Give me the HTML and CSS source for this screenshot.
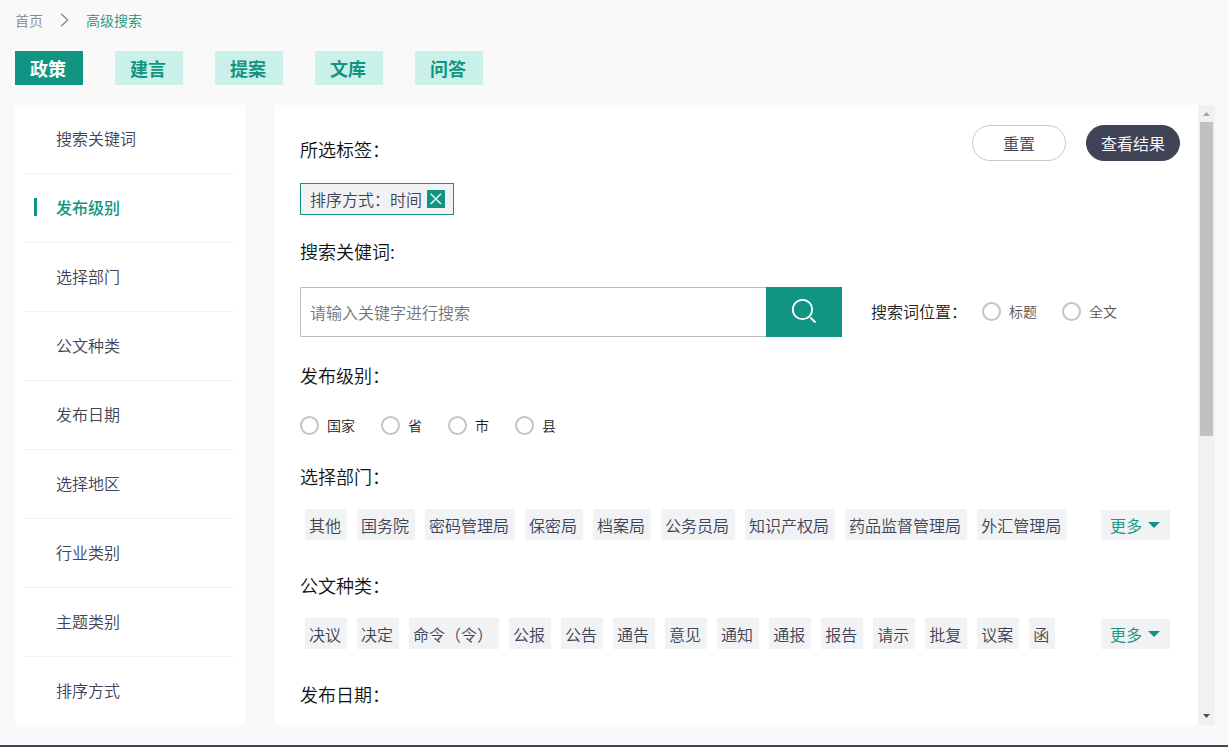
FILE: index.html
```html
<!DOCTYPE html>
<html lang="zh-CN">
<head>
<meta charset="utf-8">
<meta name="viewport" content="width=device-width, initial-scale=1">
<title>高级搜索</title>
<link rel="stylesheet" href="styles.css">
</head>
<body>
<div class="page">
  <nav class="breadcrumb" aria-label="面包屑">
    <a class="crumb" href="#">首页</a>
    <svg class="crumb-arrow" width="9" height="14" viewBox="0 0 9 14" aria-hidden="true"><path d="M1 .7 7.7 7 1 13.3"/></svg>
    <a class="crumb crumb-current" href="#">高级搜索</a>
  </nav>

  <div class="tabs">
    <button class="tab tab-active" type="button">政策</button>
    <button class="tab" type="button">建言</button>
    <button class="tab" type="button">提案</button>
    <button class="tab" type="button">文库</button>
    <button class="tab" type="button">问答</button>
  </div>

  <div class="columns">
    <nav class="sidebar" aria-label="筛选条件">
      <a class="side-link" href="#">搜索关键词</a>
      <a class="side-link side-active" href="#">发布级别</a>
      <a class="side-link" href="#">选择部门</a>
      <a class="side-link" href="#">公文种类</a>
      <a class="side-link" href="#">发布日期</a>
      <a class="side-link" href="#">选择地区</a>
      <a class="side-link" href="#">行业类别</a>
      <a class="side-link" href="#">主题类别</a>
      <a class="side-link" href="#">排序方式</a>
    </nav>

    <main class="panel">
      <form class="filters">
        <section class="section-tags">
          <div class="top-row">
            <h2 class="heading">所选标签：</h2>
            <div class="actions">
              <button class="pill" type="reset">重置</button>
              <button class="pill pill-dark" type="button">查看结果</button>
            </div>
          </div>
          <div class="selected">
            <span>排序方式：时间</span>
            <button class="remove" type="button" aria-label="移除">
              <svg width="18" height="18" viewBox="0 0 18 18" aria-hidden="true"><path d="M3.700 3.700 14 14M14 3.700 3.700 14"/></svg>
            </button>
          </div>
        </section>

        <section class="section-search">
          <h2 class="heading"><label for="keyword">搜索关健词:</label></h2>
          <div class="search-row">
            <div class="search-box">
              <input class="search-input" id="keyword" type="text" placeholder="请输入关键字进行搜索">
              <button class="search-button" type="button" aria-label="搜索">
                <svg width="26" height="26" viewBox="0 0 26 26" aria-hidden="true"><circle cx="11.500" cy="10.500" r="9.700"/><path d="m19.300 18.300 5.200 5.200"/></svg>
              </button>
            </div>
            <div class="position" role="radiogroup" aria-labelledby="position-label">
              <span id="position-label">搜索词位置：</span>
              <div class="radios radios-muted">
                <label class="option"><input class="radio" type="radio" name="position">标题</label>
                <label class="option"><input class="radio" type="radio" name="position">全文</label>
              </div>
            </div>
          </div>
        </section>

        <section class="section-level">
          <h2 class="heading">发布级别：</h2>
          <div class="radios radios-level">
            <label class="option"><input class="radio" type="radio" name="level">国家</label>
            <label class="option"><input class="radio" type="radio" name="level">省</label>
            <label class="option"><input class="radio" type="radio" name="level">市</label>
            <label class="option"><input class="radio" type="radio" name="level">县</label>
          </div>
        </section>

        <section class="section-chips">
          <h2 class="heading">选择部门：</h2>
          <div class="chip-row">
            <div class="chips">
              <button class="chip" type="button">其他</button>
              <button class="chip" type="button">国务院</button>
              <button class="chip" type="button">密码管理局</button>
              <button class="chip" type="button">保密局</button>
              <button class="chip" type="button">档案局</button>
              <button class="chip" type="button">公务员局</button>
              <button class="chip" type="button">知识产权局</button>
              <button class="chip" type="button">药品监督管理局</button>
              <button class="chip" type="button">外汇管理局</button>
            </div>
            <button class="more" type="button">更多<svg width="12" height="6" viewBox="0 0 12 6" aria-hidden="true"><path d="M0 0h12L6 6z"/></svg></button>
          </div>
        </section>

        <section class="section-chips">
          <h2 class="heading">公文种类：</h2>
          <div class="chip-row">
            <div class="chips">
              <button class="chip" type="button">决议</button>
              <button class="chip" type="button">决定</button>
              <button class="chip" type="button">命令（令）</button>
              <button class="chip" type="button">公报</button>
              <button class="chip" type="button">公告</button>
              <button class="chip" type="button">通告</button>
              <button class="chip" type="button">意见</button>
              <button class="chip" type="button">通知</button>
              <button class="chip" type="button">通报</button>
              <button class="chip" type="button">报告</button>
              <button class="chip" type="button">请示</button>
              <button class="chip" type="button">批复</button>
              <button class="chip" type="button">议案</button>
              <button class="chip" type="button">函</button>
            </div>
            <button class="more" type="button">更多<svg width="12" height="6" viewBox="0 0 12 6" aria-hidden="true"><path d="M0 0h12L6 6z"/></svg></button>
          </div>
        </section>

        <h2 class="heading">发布日期：</h2>
      </form>
      <div class="scrollbar" aria-hidden="true">
        <svg class="arrow-up" width="17" height="17" viewBox="0 0 17 17"><path d="M5 11h7L8.500 7z"/></svg>
        <div class="track"><div class="thumb"></div></div>
        <svg class="arrow-down" width="17" height="17" viewBox="0 0 17 17"><path d="M5 6h7L8.500 10z"/></svg>
      </div>
    </main>
  </div>
</div>
<footer class="footer"></footer>
</body>
</html>
```
FILE: styles.css
```css
* { box-sizing: border-box; }

body {
  margin: 0;
  background: #f9f9f9;
  color: #404356;
  font-family: "Noto Sans CJK SC", sans-serif;
  font-size: 16px;
  font-weight: 350;
  line-height: 24px;
}

button, input { font: inherit; color: inherit; margin: 0; }
button { padding: 0; border: 0; cursor: pointer; }
a { text-decoration: none; color: inherit; }
svg { display: block; }

.page { padding: 8px 13px 20px 15px; }

.breadcrumb {
  display: flex;
  align-items: center;
  gap: 17px;
  font-size: 14px;
}
.crumb { color: #888; }
.crumb-current { color: #119582; }
.crumb-arrow { fill: none; stroke: #888; stroke-width: 1.3; }

.tabs { display: flex; gap: 32px; margin: 19px 0 20px; }
.tab {
  height: 34px;
  padding: 0 17px 0 15px;
  background: #caf0ea;
  color: #119582;
  font-size: 18px;
  font-weight: 700;
}
.tab-active { background: #119582; color: #fff; }

.columns { display: flex; gap: 30px; }

.sidebar {
  flex: 0 0 230px;
  padding: 0 11px 0 9px;
  background: #fff;
}
.side-link {
  display: flex;
  align-items: center;
  height: 69px;
  padding: 0 0 2px 32px;
  border-bottom: 1px solid #f1f1f1;
}
.side-link:last-child { height: 68px; border-bottom: 0; }
.side-active { padding-left: 10px; color: #119582; font-weight: 500; }
.side-active::before {
  content: "";
  width: 3px;
  height: 18px;
  margin-right: 19px;
  background: #119582;
}

.panel { flex: 1; min-width: 0; display: flex; background: #fff; }
.filters { flex: 1; min-width: 0; padding: 20px 18px 18px 25px; }

.heading {
  margin: 0;
  color: #111;
  font-size: 18px;
  font-weight: 350;
  line-height: 24px;
}

.top-row { display: flex; justify-content: space-between; align-items: flex-end; margin-bottom: 22px; }
.actions { display: flex; gap: 20px; }
.pill {
  width: 94px;
  height: 36px;
  border: 1px solid #c8c8c8;
  border-radius: 18px;
  background: #fff;
}
.pill-dark { border-color: #404356; background: #404356; color: #fff; }

.selected {
  display: inline-flex;
  align-items: center;
  gap: 5px;
  height: 32px;
  padding: 0 8px 0 9px;
  border: 1px solid #119582;
  background: #f0f2f4;
  vertical-align: top;
}
.remove { width: 18px; height: 18px; background: #119582; }
.remove path { stroke: #fff; stroke-width: 1.3; }

.section-tags { margin-bottom: 24px; }

.section-search { margin-bottom: 26px; }
.search-row { display: flex; align-items: center; gap: 29px; margin-top: 24px; }
.search-box { display: flex; flex: 0 1 542px; min-width: 0; height: 50px; }
.search-input {
  flex: 1;
  min-width: 0;
  padding: 0 9px;
  border: 1px solid #bbb;
  border-right: 0;
  border-radius: 2px 0 0 2px;
  background: #fff;
}
.search-input::placeholder { color: #757575; opacity: 1; }
.search-button {
  display: flex;
  align-items: center;
  justify-content: center;
  flex: 0 0 76px;
  background: #119582;
}
.search-button svg { fill: none; stroke: #fff; stroke-width: 1.8; }
.position { display: flex; align-items: center; gap: 15px; padding-bottom: 2px; color: #222; white-space: nowrap; }

.radios { display: flex; gap: 25px; color: #222; font-size: 14px; }
.radios-muted { color: #555; }
.option { display: flex; align-items: center; gap: 8px; }
.radio {
  appearance: none;
  width: 19px;
  height: 19px;
  border: 2px solid #c4c4c4;
  border-radius: 50%;
  background: #fff;
}
.radio:checked { border: 6px solid #119582; }

.section-level { margin-bottom: 27px; }
.radios-level { gap: 26px; margin-top: 26px; }

.section-chips { margin-bottom: 33px; }
.chip-row {
  display: flex;
  justify-content: space-between;
  align-items: flex-end;
  gap: 20px;
  margin-top: 21px;
  padding: 0 10px 0 5px;
}
.chips { display: flex; flex-wrap: wrap; gap: 10px; }
.chip { height: 31px; padding: 0 6px 0 4px; background: #f0f2f4; }
.more {
  display: flex;
  align-items: center;
  flex: none;
  gap: 6px;
  height: 30px;
  padding: 0 10px 0 9px;
  background: #f0f2f4;
  color: #119582;
}
.more svg { fill: #119582; }

.scrollbar { display: flex; flex-direction: column; flex: 0 0 17px; background: #f1f1f1; }
.track { flex: 1; padding: 0 2px; }
.thumb { height: 53.6%; background: #c1c1c1; }
.arrow-up { fill: #a3a3a3; }
.arrow-down { fill: #505050; }

.footer { height: 2px; background: #404356; }
```
